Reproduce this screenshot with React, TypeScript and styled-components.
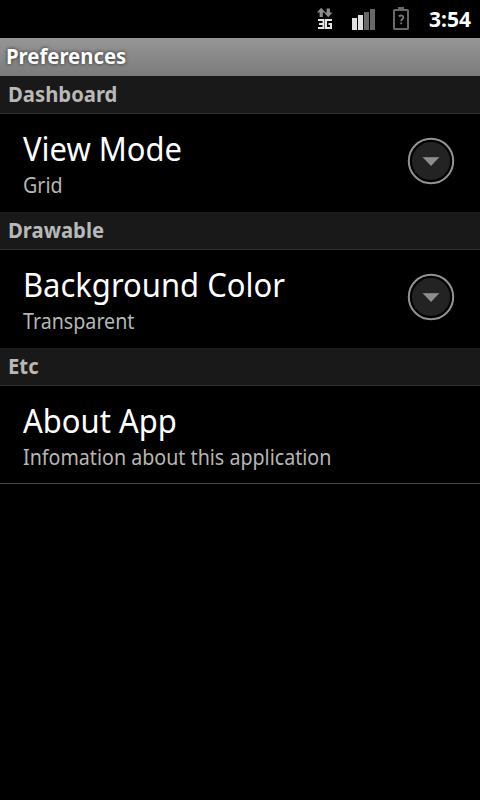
import React from "react";
import styled, { createGlobalStyle } from "styled-components";

const Global = createGlobalStyle`
  * { box-sizing: border-box; }
  body { margin: 0; background: #000; font-family: "Noto Sans", "Open Sans", sans-serif; }
`;
const Screen = styled.main`
  width: 480px;
  height: 800px;
  background: #000;
  color: #fff;
  overflow: hidden;
`;
const Status = styled.header`
  height: 38px;
  display: flex;
  align-items: center;
  justify-content: flex-end;
  padding-right: 9px;
`;
const StatusIcon = styled.svg`
  display: block;
  flex: none;
  width: 38px;
  height: 38px;
`;
const Clock = styled.time`
  font-size: 21px;
  line-height: 38px;
  font-weight: 700;
  margin-left: 9px;
`;
const Condensed = styled.span<{ $ratio: number }>`
  display: block;
  width: max-content;
  transform: scaleX(${(p) => p.$ratio});
  transform-origin: 0 0;
`;
const Title = styled.h1`
  margin: 0;
  height: 38px;
  padding-left: 6px;
  font-size: 21px;
  line-height: 36px;
  background: linear-gradient(#969696, #7b7b7b);
  text-shadow: 0 0 4px rgba(0, 0, 0, 0.75);
`;
const Category = styled.h2`
  margin: 0;
  height: 38px;
  padding-left: 8px;
  font-size: 21px;
  line-height: 36px;
  color: #b8b8b8;
  background: #191919;
  border-bottom: 1px solid #333;
`;
const Row = styled.div<{ $last?: boolean }>`
  height: 98px;
  padding: 0 25px 0 23px;
  display: flex;
  align-items: center;
  justify-content: space-between;
  border-bottom: ${(p) => (p.$last ? "1px solid #444" : "0")};
`;
const Labels = styled.div`
  height: 74px;
`;
const Name = styled.div`
  font-size: 33.5px;
  line-height: 44px;
  padding-bottom: 2px;
`;
const Summary = styled.div`
  font-size: 21px;
  line-height: 27px;
  color: #b6b6b6;
`;
const Expand = styled.svg`
  display: block;
  width: 48px;
  height: 48px;
  margin-top: -4px;
`;

function Heading({ children }: { children: React.ReactNode }) {
  return (
    <Category>
      <Condensed $ratio={0.965}>{children}</Condensed>
    </Category>
  );
}

type PreferenceProps = { name: string; summary: string; list?: boolean; last?: boolean };

function Preference({ name, summary, list, last }: PreferenceProps) {
  return (
    <Row $last={last}>
      <Labels>
        <Name>
          <Condensed $ratio={0.924}>{name}</Condensed>
        </Name>
        <Summary>
          <Condensed $ratio={0.936}>{summary}</Condensed>
        </Summary>
      </Labels>
      {list && (
        <Expand viewBox="0 0 48 48">
          <circle cx="24" cy="24" r="22.2" fill="#000" stroke="#929292" strokeWidth="2" />
          <circle cx="24" cy="24" r="19" fill="#232323" />
          <path d="M15.5 20h17L24 29z" fill="#8e8e8e" />
          <path d="M16 20.5h16" stroke="#7a7a7a" />
        </Expand>
      )}
    </Row>
  );
}

export default function App() {
  return (
    <>
      <Global />
      <Screen>
        <Status>
          <StatusIcon viewBox="306 0 38 38">
            <path
              d="M317 12.5l4.2-4.7 4.2 4.7h-2.6V17h-3.2v-4.5zM324 12.5h2.7V8.5h3.2v4h2.6l-4.2 4.7z"
              fill="#8c8c8c"
            />
            <path
              d="M318 20h5.5v8H318M319 24h4.5M332 20h-6v8h5v-4h-2.5"
              fill="none"
              stroke="#e4e4e4"
              strokeWidth="2"
            />
          </StatusIcon>
          <StatusIcon viewBox="344 0 38 38">
            <path d="M352 18h5v12h-5zM358 15h5v15h-5z" fill="#e0e0e0" />
            <path d="M364 12h5v18h-5zM370 9h5v21h-5z" fill="#686868" />
          </StatusIcon>
          <StatusIcon viewBox="382 0 38 38">
            <rect x="394" y="10" width="14" height="19" rx="0.5" fill="none" stroke="#686868" strokeWidth="2" />
            <path d="M398 7h6v3h-6z" fill="#686868" />
            <path
              d="M398.8 16.2c1.8-1.2 4.6-.8 4.6 1 0 1.9-2.2 1.7-2.2 4M400.2 23.3h2"
              fill="none"
              stroke="#777"
              strokeWidth="1.8"
            />
          </StatusIcon>
          <Clock>3:54</Clock>
        </Status>
        <Title>
          <Condensed $ratio={0.968}>Preferences</Condensed>
        </Title>
        <Heading>Dashboard</Heading>
        <Preference name="View Mode" summary="Grid" list />
        <Heading>Drawable</Heading>
        <Preference name="Background Color" summary="Transparent" list />
        <Heading>Etc</Heading>
        <Preference name="About App" summary="Infomation about this application" last />
      </Screen>
    </>
  );
}
